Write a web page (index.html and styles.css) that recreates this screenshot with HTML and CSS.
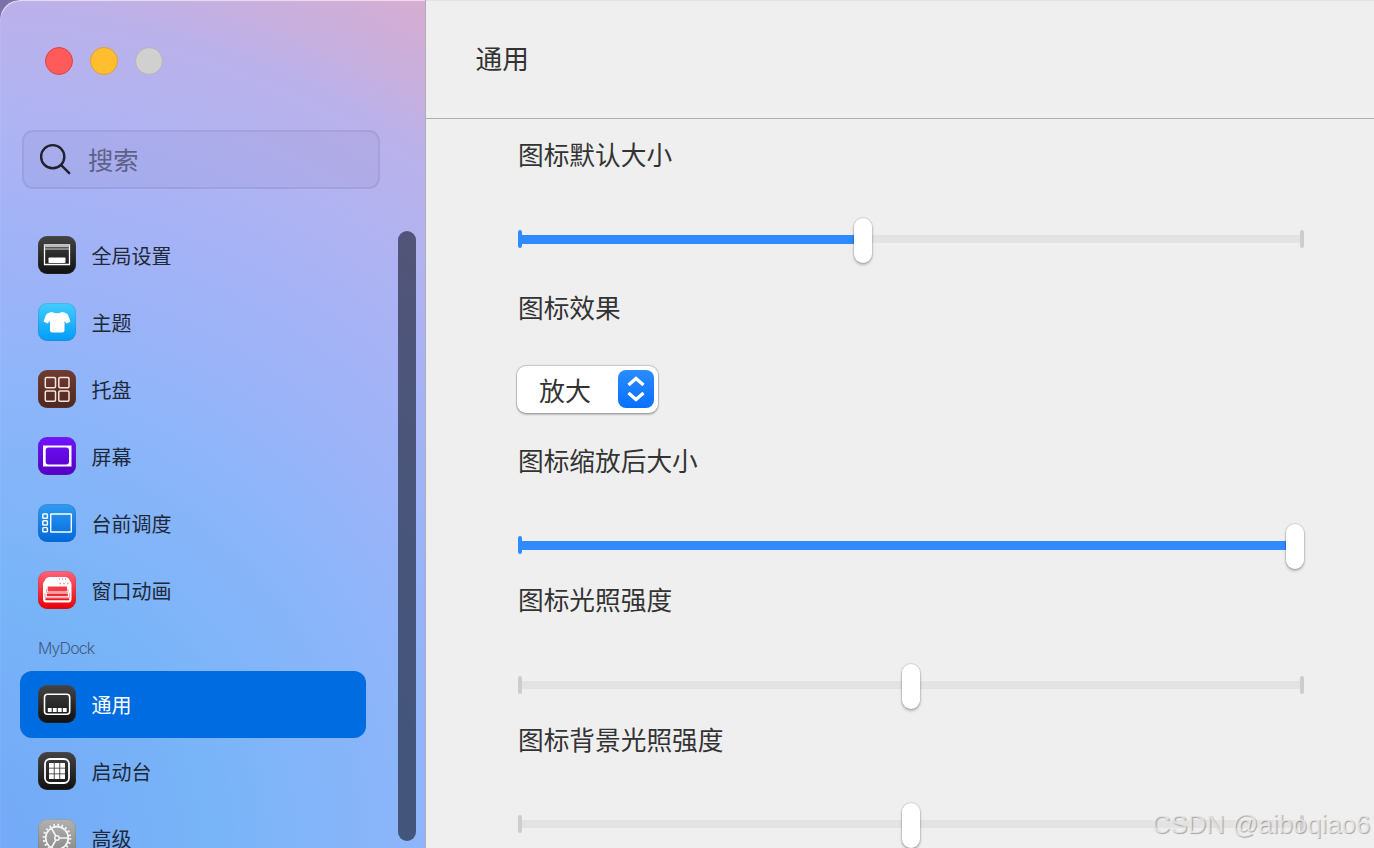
FILE: index.html
```html
<!DOCTYPE html>
<html lang="zh-CN">
<head>
    <meta charset="UTF-8">
    <title>通用</title>
    <link rel="stylesheet" href="styles.css">
</head>
<body>
    <div class="window">
        <aside class="sidebar">
            <div class="lights">
                <span class="light close"></span>
                <span class="light minimize"></span>
                <span class="light disabled"></span>
            </div>

            <div class="search">
                <svg class="search-icon" viewBox="0 0 34 34">
                    <circle cx="14.7" cy="14.7" r="11.6" />
                    <path d="M23.2 23.2L31.2 31.2" />
                </svg>
                <span>搜索</span>
            </div>

            <div class="sidebar-body">
                <nav class="menu">
                    <div class="menu-item">
                        <svg class="icon black" viewBox="0 0 38 38">
                            <path d="M6.5 9h25v19.5h-25z" fill="none" stroke="#fff" stroke-width="1.3" />
                            <path d="M6.5 8.5h25v2.7h-25z" fill="#bbb" />
                            <path d="M6.5 13h25" stroke="#ddd" />
                            <rect x="10.5" y="21.5" width="17" height="5.5" rx=".8" fill="#fff" />
                        </svg>
                        <span>全局设置</span>
                    </div>
                    <div class="menu-item">
                        <svg class="icon cyan" viewBox="0 0 38 38">
                            <path d="M14 9Q19 11.5 24 9Q29 10 30 12L32.5 18.5L28.5 20.5L26.5 18V27Q26.5 29.5 24 29.5H14.5Q12 29.5 12 27V18L9.5 20.5L5.5 18.5L8 12Q9 10 14 9Z" fill="#fff" />
                        </svg>
                        <span>主题</span>
                    </div>
                    <div class="menu-item">
                        <svg class="icon brown" viewBox="0 0 38 38">
                            <g fill="none" stroke="#f3e6df" stroke-width="1.5">
                                <rect x="7.3" y="7.5" width="10.2" height="10.2" rx="1.2" />
                                <rect x="20.8" y="7.5" width="10.2" height="10.2" rx="1.2" />
                                <rect x="7.3" y="21" width="10.2" height="10.2" rx="1.2" />
                                <rect x="20.8" y="21" width="10.2" height="10.2" rx="1.2" />
                            </g>
                        </svg>
                        <span>托盘</span>
                    </div>
                    <div class="menu-item">
                        <svg class="icon purple" viewBox="0 0 38 38">
                            <path fill="#fff" fill-rule="evenodd" d="M5 8.5H33.5V29.5H5ZM10.5 10.5Q7.7 10.5 7.7 13.5V24.5Q7.7 27.5 10.5 27.5H28Q31 27.5 31 24.5V13.5Q31 10.5 28 10.5Z" />
                        </svg>
                        <span>屏幕</span>
                    </div>
                    <div class="menu-item">
                        <svg class="icon blue" viewBox="0 0 38 38">
                            <g fill="none" stroke="#fff" stroke-width="1.4">
                                <rect x="12.7" y="10" width="20.6" height="18" rx=".6" />
                                <rect x="4.8" y="10" width="4.6" height="4.2" rx=".8" />
                                <rect x="4.8" y="16.8" width="4.6" height="4.2" rx=".8" />
                                <rect x="4.8" y="23.6" width="4.6" height="4.2" rx=".8" />
                            </g>
                        </svg>
                        <span>台前调度</span>
                    </div>
                    <div class="menu-item">
                        <svg class="icon red" viewBox="0 0 38 38">
                            <path d="M8 7.5Q9.5 6 11.500 6H27.500Q29.500 6 30.500 7.500L33 11.500Q33.500 12.500 33.500 14V28Q33.500 31.500 30.500 31.500H8Q5 31.500 5 28V14Q5 12.500 5.500 11.500Z" fill="#fff" />
                            <rect x="9.700" y="15.500" width="19.300" height="5" rx=".8" fill="#ee3b47" />
                            <path d="M8.500 18V21.500H30V18M7 22V26.500H31.500V22" fill="none" stroke="#f5868c" stroke-width=".8" />
                            <rect x="8.800" y="22.500" width="21" height="2.700" rx=".8" fill="#e92b33" />
                            <rect x="7.300" y="27.300" width="24" height="2" rx=".8" fill="#e41a20" />
                            <path d="M21.500 12.500h1.500M25.200 12.500h1.500M28.900 12.500h1.500M21 8h1M24 8h1M27 8h1" stroke="#ff8a92" stroke-width="1.300" />
                        </svg>
                        <span>窗口动画</span>
                    </div>

                    <div class="menu-title">MyDock</div>

                    <div class="menu-item active">
                        <svg class="icon black" viewBox="0 0 38 38">
                            <rect x="6.5" y="9.3" width="25.2" height="20" rx="3" fill="none" stroke="#fff" stroke-width="1.6" />
                            <path d="M9.8 23h3.9v3.9h-3.9zM14.8 23h3.9v3.9h-3.9zM19.8 23h3.9v3.9h-3.9zM24.8 23h3.9v3.9h-3.9z" fill="#fff" />
                        </svg>
                        <span>通用</span>
                    </div>
                    <div class="menu-item">
                        <svg class="icon black" viewBox="0 0 38 38">
                            <rect x="7" y="7" width="24" height="24" rx="5" fill="none" stroke="#fff" stroke-width="1.8" />
                            <path d="M11 11h4.8v4.8H11zM16.6 11h4.8v4.8h-4.8zM22.2 11H27v4.8h-4.8zM11 16.6h4.8v4.8H11zM16.6 16.6h4.8v4.8h-4.8zM22.2 16.6H27v4.8h-4.8zM11 22.2h4.8V27H11zM16.6 22.2h4.8V27h-4.8zM22.2 22.2H27V27h-4.8z" fill="#fff" />
                        </svg>
                        <span>启动台</span>
                    </div>
                    <div class="menu-item">
                        <svg class="icon gray" viewBox="0 0 38 38">
                            <g fill="none" stroke="#f5f5f5">
                                <circle cx="19" cy="19" r="11.3" stroke-width="1.7" />
                                <circle cx="19" cy="19" r="13.2" stroke-width="2.3" stroke-dasharray="1.7 2.447" />
                                <circle cx="19" cy="19" r="2.2" stroke-width="1.5" />
                                <path d="M21.5 19H30M17.8 16.8L13.5 9.3M17.8 21.2L13.5 28.7" stroke-width="1.7" />
                            </g>
                        </svg>
                        <span>高级</span>
                    </div>
                </nav>
                <div class="scrollbar"></div>
            </div>
        </aside>

        <main class="main">
            <header class="header">通用</header>

            <div class="settings">
                <div class="setting wide">
                    <label>图标默认大小</label>
                    <div class="slider">
                        <div class="track"></div>
                        <div class="fill" style="width: 344px"></div>
                        <div class="thumb" style="left: 336px"></div>
                    </div>
                </div>
                <div class="setting with-select">
                    <label>图标效果</label>
                    <div class="select">
                        <span>放大</span>
                        <svg class="select-icon" viewBox="0 0 36 38">
                            <path d="M10.5 15L18 8.5L25.5 15M10.5 23L18 29.5L25.5 23" />
                        </svg>
                    </div>
                </div>
                <div class="setting">
                    <label>图标缩放后大小</label>
                    <div class="slider">
                        <div class="track"></div>
                        <div class="fill" style="width: 777px"></div>
                        <div class="thumb" style="left: 768px"></div>
                    </div>
                </div>
                <div class="setting">
                    <label>图标光照强度</label>
                    <div class="slider empty">
                        <div class="track"></div>
                        <div class="thumb" style="left: 384px"></div>
                    </div>
                </div>
                <div class="setting">
                    <label>图标背景光照强度</label>
                    <div class="slider empty last">
                        <div class="track"></div>
                        <div class="thumb" style="left: 384px"></div>
                    </div>
                </div>
            </div>
            <div class="watermark">CSDN @aiboqiao6</div>
        </main>
    </div>
</body>
</html>
```

FILE: styles.css
```css
* {
    box-sizing: border-box;
}

body {
    margin: 0;
    height: 848px;
    overflow: hidden;
    background: #7c72a8;
    font-family: Inter, "Noto Sans CJK SC", sans-serif;
    color: #333;
}

.window {
    display: flex;
    height: 848px;
    border-radius: 20px 0 0 0;
    overflow: hidden;
}

/* 侧边栏 */
.sidebar {
    display: flex;
    flex-direction: column;
    width: 426px;
    flex-shrink: 0;
    padding: 46.5px 0 0 20px;
    border-right: 1px solid #b0adb8;
    border-radius: 20px 0 0 0;
    background: radial-gradient(circle at -50px 848px, #74aaf7 60px, #78b4f8 260px, #8db5fa 460px, #9bb3f8 560px, #a5b3f6 650px, #b0b3f2 740px, #bab1ea 840px, #c9afdc 900px, #d7add1 972px);
    box-shadow: inset 1px 2px 1px -1px rgba(255, 255, 255, 0.6);
}

.lights {
    display: flex;
    gap: 17px;
    margin-left: 24.5px;
}

.light {
    width: 28px;
    height: 28px;
    border: 1px solid #df4148;
    border-radius: 50%;
    background: #ff5b5a;
}

.light.minimize {
    border-color: #dda132;
    background: #ffbe2f;
}

.light.disabled {
    border-color: #b5b3b7;
    background: #d0d0d0;
}

.search {
    display: flex;
    align-items: center;
    width: 358px;
    height: 59px;
    margin: 55.5px 0 0 2px;
    padding: 0 0 2px 14px;
    border: 2px solid rgba(70, 60, 110, 0.1);
    border-radius: 11px;
    background: rgba(110, 90, 150, 0.08);
    font-size: 25.3px;
    color: #5e6188;
}

.search-icon {
    width: 34px;
    height: 34px;
    margin-right: 16px;
    fill: none;
    stroke: #20212b;
    stroke-width: 2.4;
    stroke-linecap: round;
}

.sidebar-body {
    display: flex;
    flex: 1;
    min-height: 0;
    margin-top: 33px;
}

.menu {
    width: 346px;
}

.menu-item {
    display: flex;
    align-items: center;
    gap: 15.5px;
    height: 67px;
    padding: 0 0 1px 18px;
    border-radius: 12px;
    font-size: 20px;
    color: #20293a;
}

.menu-item.active {
    background: #006ce1;
    color: #fff;
}

.menu-title {
    height: 47px;
    padding-left: 18px;
    font-size: 16px;
    font-weight: 300;
    line-height: 49px;
    letter-spacing: -0.9px;
    color: #425c82;
}

.icon {
    width: 38px;
    height: 38px;
    border-radius: 9px;
    box-shadow: inset 0 0 0 1px rgba(90, 90, 110, 0.2);
}

.black {
    background: linear-gradient(#444, #101010);
}

.cyan {
    background: linear-gradient(#43cdff, #029cf8);
}

.brown {
    background: linear-gradient(#713b30, #4e281f);
}

.purple {
    background: linear-gradient(#7212ff, #5500c2);
}

.blue {
    background: linear-gradient(#309bf3, #0068dc);
}

.red {
    background: linear-gradient(#ff6478, #e80006);
}

.gray {
    background: linear-gradient(#b2b2b2, #858585);
}

.scrollbar {
    width: 18px;
    height: 610px;
    margin: 9px 0 0 32px;
    border-radius: 9px;
    background: rgba(27, 31, 52, 0.64);
}

/* 右侧内容 */
.main {
    position: relative;
    flex: 1;
    background: #efefef;
    box-shadow: inset 0 1px 0 #e4e4e4;
}

.header {
    height: 119px;
    padding-left: 49.5px;
    border-bottom: 1px solid #aeaeae;
    font-size: 26.7px;
    line-height: 119px;
}

.settings {
    display: flex;
    flex-direction: column;
    gap: 13px;
    padding: 17px 0 0 92px;
}

.setting label {
    display: block;
    height: 40px;
    font-size: 25.7px;
    line-height: 40px;
}

.setting.wide {
    margin-bottom: 14px;
}

.setting.with-select {
    margin-bottom: 16px;
}

.slider {
    position: relative;
    display: flex;
    align-items: center;
    width: 786px;
    height: 46px;
    margin-top: 40px;
}

.slider.empty {
    margin-top: 41px;
}

.slider.last {
    margin-top: 40px;
}

.slider::before,
.slider::after {
    content: "";
    width: 4px;
    height: 18px;
    border-radius: 2px;
    background: #cdcdcd;
}

.slider::before {
    background: #2f8bff;
}

.slider.empty::before {
    background: #cdcdcd;
}

.track {
    flex: 1;
    height: 8px;
    background: #e3e3e3;
}

.fill {
    position: absolute;
    top: 19px;
    left: 2px;
    height: 9px;
    background: #2f8bff;
}

.thumb {
    position: absolute;
    top: 2px;
    width: 18px;
    height: 45px;
    border-radius: 9px;
    background: #fff;
    box-shadow: 0 0 1px 1px rgba(0, 0, 0, 0.1), 0 2px 3px rgba(0, 0, 0, 0.25);
}

.select {
    display: flex;
    align-items: center;
    justify-content: space-between;
    width: 141px;
    height: 47px;
    margin: 37px 0 0 -1px;
    padding: 0 4px 1px 22px;
    border-radius: 9px;
    background: #fff;
    box-shadow: 0 0 1px 1px rgba(0, 0, 0, 0.18), 0 2px 2px rgba(0, 0, 0, 0.2);
    font-size: 26px;
}

.select-icon {
    width: 36px;
    height: 38px;
    border-radius: 8px;
    background: linear-gradient(#2b8bff, #0870ff);
    fill: none;
    stroke: #fff;
    stroke-width: 3.3;
}

/* 水印 */
.watermark {
    position: absolute;
    right: 4px;
    bottom: 9px;
    font-family: "Liberation Sans", sans-serif;
    font-size: 25.8px;
    line-height: 30px;
    white-space: nowrap;
    color: rgba(240, 240, 240, 0.75);
    text-shadow: 1px 1px 1px rgba(0, 0, 0, 0.3);
}
```
